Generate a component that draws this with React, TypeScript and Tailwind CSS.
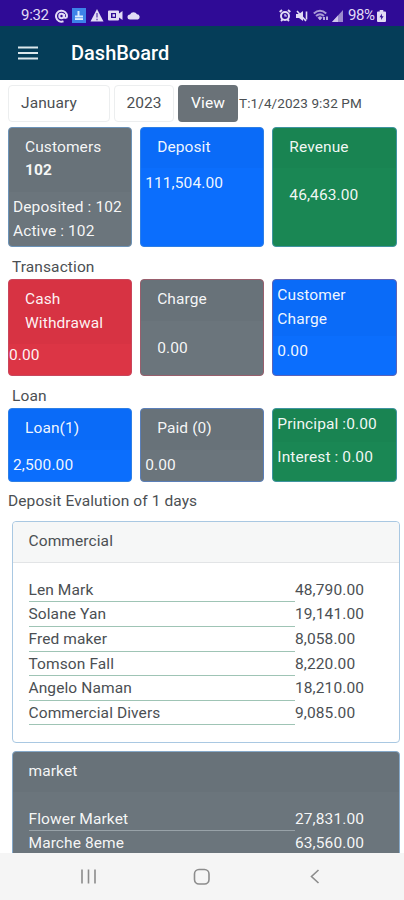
import type { ReactNode } from "react";

type CardProps = {
    title: ReactNode;
    children: ReactNode;
    className: string;
    headClass?: string;
    bodyClass?: string;
};

const Card = ({ title, children, className, headClass = "px-4 py-2", bodyClass = "p-1" }: CardProps) => {
    return (
        <div className={`flex-1 min-w-0 rounded border text-white/95 leading-[23.9px] ${className}`}>
            <div className={`bg-black/2 border-b border-transparent whitespace-nowrap ${headClass}`}>{title}</div>
            <div className={`whitespace-nowrap ${bodyClass}`}>{children}</div>
        </div>
    );
};

const commercial = [
    ["Len Mark", "48,790.00"],
    ["Solane Yan", "19,141.00"],
    ["Fred maker", "8,058.00"],
    ["Tomson Fall", "8,220.00"],
    ["Angelo Naman", "18,210.00"],
    ["Commercial Divers", "9,085.00"],
];

const market = [
    ["Flower Market", "27,831.00"],
    ["Marche 8eme", "63,560.00"],
];

const Rows = ({ items, line }: { items: string[][]; line: string }) => {
    return (
        <div className="px-[15.5px] pt-[15px]">
            {items.map(([name, amount]) => (
                <div key={name} className="flex h-[24.6px] leading-[24.6px]">
                    <div className={`w-[266.5px] border-b ${line}`}>{name}</div>
                    <div>{amount}</div>
                </div>
            ))}
        </div>
    );
};

const StatusBar = () => {
    return (
        <div className="h-[26px] shrink-0 bg-[#2f0b96] flex items-center justify-between pl-[21px] pr-[18px] pt-[5px] text-[#e2dcf5] text-[15px] leading-none">
            <div className="flex items-center">
                <span className="w-[28px] tracking-[-0.3px]">9:32</span>
                <svg className="ml-[5px]" width="15" height="14" viewBox="0 0 15 14" fill="none" stroke="currentColor" strokeWidth="2">
                    <path d="M9.5 12.3A5.5 5.5 0 1 1 13 7.3c0 2-3 2.2-3 0V5" />
                    <circle cx="7.5" cy="7" r="2.2" />
                </svg>
                <svg className="ml-[3px]" width="14" height="15" viewBox="0 0 14 15">
                    <rect width="14" height="15" fill="#3d83e8" />
                    <path d="M5.5 3h2v4.5H11V12H3V7.5h2.5z" fill="#d9ecff" />
                    <path d="M3 9.7h8" stroke="#3d83e8" strokeWidth=".7" />
                </svg>
                <svg className="ml-[4px]" width="14" height="13" viewBox="0 0 14 13">
                    <path d="M7 0l6.5 12.5H.5z" fill="currentColor" />
                    <path d="M7 4v4.5M7 9.7v1.5" stroke="#5d43ad" strokeWidth="1.3" />
                </svg>
                <svg className="ml-[4px]" width="15" height="11" viewBox="0 0 15 11" fill="currentColor">
                    <path fillRule="evenodd" d="M1 .5h9q1 0 1 1v2L14.5 1v9L11 7.5v2q0 1-1 1H1q-1 0-1-1v-8q0-1 1-1zM3 3v5h5V3z" />
                    <rect x="4.5" y="4.2" width="2.5" height="2.5" />
                </svg>
                <svg className="ml-[4px]" width="14" height="9" viewBox="0 0 14 9" fill="currentColor">
                    <path d="M3 8.5a2.5 2.5 0 0 1 0-5A4 4 0 0 1 10 3.3a2.7 2.7 0 0 1 1 5.2z" />
                </svg>
            </div>
            <div className="flex items-center">
                <svg width="12" height="13" viewBox="0 0 12 13" fill="none" stroke="currentColor">
                    <path d="M.7 3L3 1M9 1l2.3 2M2 12l1.5-1.5M10 12l-1.5-1.5" strokeWidth="1.8" />
                    <circle cx="6" cy="7" r="4" strokeWidth="2" />
                    <path d="M6 5v2h2" strokeWidth="1.2" />
                </svg>
                <svg className="ml-[5px]" width="12" height="12" viewBox="0 0 12 12">
                    <path d="M0 4h3l4-3v10L3 8H0z" fill="currentColor" />
                    <path d="M1 1l9 10M10.5 1.5v8" stroke="currentColor" strokeWidth="1.6" />
                </svg>
                <svg className="ml-[5px]" width="16" height="13" viewBox="0 0 16 13" fill="none" stroke="#a99bd6">
                    <path d="M.8 4.5Q7 -1 13.2 4.5M3 7Q7 3.4 11 7" strokeWidth="2" />
                    <path d="M5 8.5Q7 7 9 8.5L7 11z" fill="#c9bfe8" strokeWidth="1" />
                    <path d="M11 11V8M14 7.5V11" stroke="currentColor" strokeWidth="1.5" />
                </svg>
                <svg className="ml-[3px]" width="11" height="12" viewBox="0 0 11 12">
                    <path d="M0 12L11 0v12z" fill="#9b8bcd" />
                    <path d="M0 12l6-6.5V12z" fill="#cfc6ec" />
                </svg>
                <span className="ml-[5px] w-[29px] tracking-[-0.4px]">98%</span>
                <svg width="9" height="12" viewBox="0 0 9 12">
                    <path d="M2.7 0h3.6v1.5H8q1 0 1 1V11q0 1-1 1H1q-1 0-1-1V2.5q0-1 1-1h1.7z" fill="currentColor" />
                    <path d="M5 3.5L2.5 7.2h1.7L4 10l2.6-3.8H4.8z" fill="#2f0b96" />
                </svg>
            </div>
        </div>
    );
};

const App = () => {
    return (
        <div className="h-[900px] w-[404px] flex flex-col overflow-hidden bg-white font-['Roboto',sans-serif] text-[15.5px] leading-[23.6px] tracking-[0.1px] text-[#4b4f53]">
            <StatusBar />

            <div className="h-[54px] shrink-0 bg-[#053d58] flex items-center text-white">
                <svg className="ml-[18px]" width="20" height="14" viewBox="0 0 20 14" stroke="#dce8ec" strokeWidth="2">
                    <path d="M0 1.5h20M0 7h20M0 12.5h20" />
                </svg>
                <h1 className="ml-[33px] pt-[2px] text-[20px] font-medium tracking-[0px]">DashBoard</h1>
            </div>

            <div className="flex-1 min-h-0 overflow-hidden">
                <div className="flex mt-[5px] ml-2 h-[37px] leading-[37px]">
                    <div className="w-[102px] border border-[#eceeef] rounded pl-3 leading-[35px]">January</div>
                    <div className="ml-1 w-[60px] border border-[#eceeef] rounded text-center leading-[35px]">2023</div>
                    <div className="ml-1 w-[60px] bg-[#6a7278] rounded text-center text-white">View</div>
                    <div className="ml-[1px] text-[13.5px] tracking-[0.1px] whitespace-nowrap">T:1/4/2023 9:32 PM</div>
                </div>

                <div className="flex gap-2 mt-[4.5px] ml-2 mr-[7.5px] h-[120.5px]">
                    <Card
                        title={<>Customers<br /><b>102</b></>}
                        className="bg-[#6b757c] border-[#6c93b8]"
                    >
                        Deposited : 102<br />Active : 102
                    </Card>
                    <Card title="Deposit" className="bg-[#0b6efd] border-[#2d7fe6]">111,504.00</Card>
                    <Card title="Revenue" className="bg-[#1a8754] border-[#3f94a0]" bodyClass="p-4">46,463.00</Card>
                </div>

                <div className="mt-[8.5px] ml-3">Transaction</div>
                <div className="flex gap-2 -mt-[0.5px] ml-2 mr-[7.5px] h-[97.5px]">
                    <Card title={<>Cash<br />Withdrawal</>} className="bg-[#dc3545] border-[#c9465c]" bodyClass="p-0">0.00</Card>
                    <Card title="Charge" className="bg-[#6b757c] border-[#985f6d]" bodyClass="p-4">0.00</Card>
                    <Card title={<>Customer<br />Charge</>} className="bg-[#0b6efd] border-[#5b63b8]" headClass="p-1">0.00</Card>
                </div>

                <div className="mt-[8.5px] ml-3">Loan</div>
                <div className="flex gap-2 -mt-[0.5px] ml-2 mr-[7.5px] h-[74px]">
                    <Card title="Loan(1)" className="bg-[#0b6efd] border-[#2d7fe6]">2,500.00</Card>
                    <Card title="Paid (0)" className="bg-[#6b757c] border-[#5b7fb8]">0.00</Card>
                    <Card title="Principal :0.00" className="bg-[#1a8754] border-[#3f94a0]" headClass="p-1">Interest : 0.00</Card>
                </div>

                <div className="mt-2 ml-2">Deposit Evalution of 1 days</div>

                <div className="mt-[8px] ml-3 mr-1 h-[222px] rounded border border-[#a9c8e2]">
                    <div className="bg-[#f6f7f7] border-b border-[#e2e4e6] rounded-t px-[15.5px] py-2">Commercial</div>
                    <Rows items={commercial} line="border-[#9fc4b5]" />
                </div>

                <div className="mt-[8px] ml-3 mr-1 h-[140px] rounded border border-[#86a9c9] bg-[#6b757c] text-white/95">
                    <div className="bg-black/2 px-[15.5px] py-2">market</div>
                    <Rows items={market} line="border-[#98a2a8]" />
                </div>
            </div>

            <div className="h-[47px] shrink-0 bg-[#f5f5f5]">
                <svg width="404" height="47" viewBox="0 0 404 47" fill="none" stroke="#8c8c8c" strokeWidth="1.6">
                    <path d="M82 16.5v14M88.5 16.5v14M95 16.5v14" />
                    <rect x="194.5" y="16.5" width="14.5" height="14.5" rx="4.5" />
                    <path d="M318.5 17l-7 6.5 7 6.5" />
                </svg>
            </div>
        </div>
    );
};

export default App;
